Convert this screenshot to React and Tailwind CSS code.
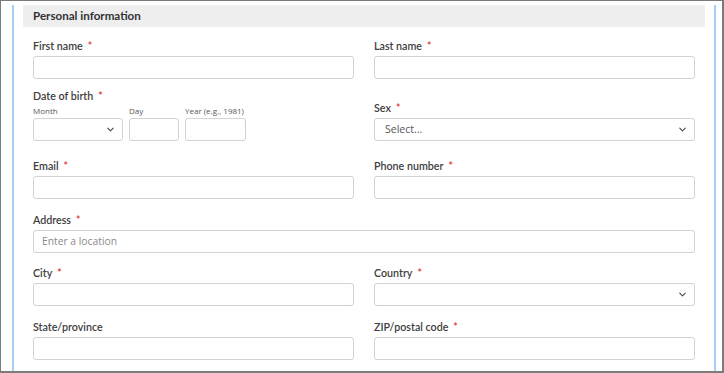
import { ChevronDown } from 'lucide-react'

const font = { fontFamily: '"Open Sans", "Liberation Sans", sans-serif' }
const labelFont = { fontFamily: 'Lato, "Open Sans", sans-serif' }

function Label({ text, required, className = '' }) {
  return (
    <div
      style={labelFont}
      className={`h-[14px] mb-[3px] text-[10.7px] leading-[14px] font-semibold text-[#3d3d3d] ${className}`}
    >
      {text}
      {required && <span className="ml-[5px] text-[10.5px] text-[#e0302a]">*</span>}
    </div>
  )
}

function Input({ placeholder, className = '' }) {
  return (
    <div
      className={`h-[23px] rounded-[3px] border border-[#d3d3d3] bg-white px-[8px] flex items-center text-[10.3px] text-[#8a8a8a] ${className}`}
    >
      {placeholder}
    </div>
  )
}

function Select({ value, className = '' }) {
  return (
    <div
      className={`h-[23px] rounded-[3px] border border-[#d3d3d3] bg-white pl-[10px] pr-[6px] flex items-center justify-between text-[10.5px] text-[#555] ${className}`}
    >
      <span>{value}</span>
      <ChevronDown className="w-[11px] h-[11px] text-[#444]" strokeWidth={2.3} />
    </div>
  )
}

function Field({ label, required, select, placeholder, value }) {
  return (
    <div>
      <Label text={label} required={required} />
      {select ? <Select value={value} /> : <Input placeholder={placeholder} />}
    </div>
  )
}

export default function App() {
  return (
    <div
      style={font}
      className="w-[724px] h-[373px] bg-white border-l border-t border-r-2 border-b-2 border-[#7b7b7b] overflow-hidden"
    >
      <div className="ml-[11px] w-[704px] h-full border-l-2 border-r-2 border-[#a5cff2] px-[9px]">
        <div
          style={labelFont}
          className="mt-[4px] h-[22px] bg-[#eeeeee] px-[10px] flex items-center text-[11.6px] font-bold text-[#333]"
        >
          Personal information
        </div>

        <div className="px-[10px]">
          <div className="mt-[12px] grid grid-cols-2 gap-x-[20px]">
            <Field label="First name" required />
            <Field label="Last name" required />
          </div>

          <div className="mt-[10px] grid grid-cols-2 gap-x-[20px] items-end">
            <div>
              <Label text="Date of birth" required className="mb-[1px]" />
              <div className="flex gap-[6px]">
                <div className="w-[90px]">
                  <div className="h-[12px] text-[8px] leading-[10px] text-[#555]">Month</div>
                  <Select value="" className="pr-[5px]" />
                </div>
                <div className="w-[50px]">
                  <div className="h-[12px] text-[8px] leading-[10px] text-[#555]">Day</div>
                  <Input />
                </div>
                <div className="w-[61px]">
                  <div className="h-[12px] text-[8px] leading-[10px] text-[#555] whitespace-nowrap">Year (e.g., 1981)</div>
                  <Input />
                </div>
              </div>
            </div>
            <Field label="Sex" required select value="Select..." />
          </div>

          <div className="mt-[18px] grid grid-cols-2 gap-x-[20px]">
            <Field label="Email" required />
            <Field label="Phone number" required />
          </div>

          <div className="mt-[14px]">
            <Field label="Address" required placeholder="Enter a location" />
          </div>

          <div className="mt-[13px] grid grid-cols-2 gap-x-[20px]">
            <Field label="City" required />
            <Field label="Country" required select value="" />
          </div>

          <div className="mt-[14px] grid grid-cols-2 gap-x-[20px]">
            <Field label="State/province" />
            <Field label="ZIP/postal code" required />
          </div>
        </div>
      </div>
    </div>
  )
}
